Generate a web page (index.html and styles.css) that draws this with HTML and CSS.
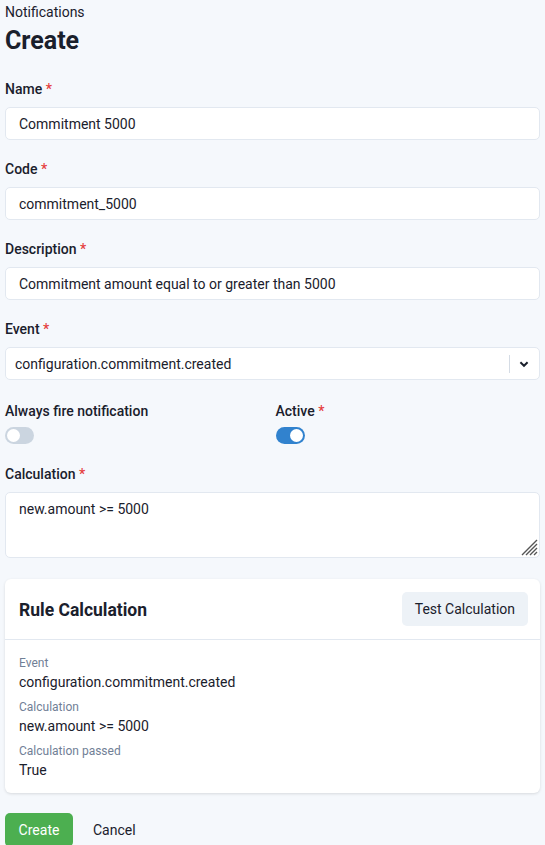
FILE: index.html
```html
<!DOCTYPE html>
<html lang="en">
<head>
    <meta charset="UTF-8">
    <meta name="viewport" content="width=device-width, initial-scale=1.0">
    <title>Create Notification</title>
    <link rel="stylesheet" href="styles.css">
</head>
<body>
    <div class="page">
        <div class="crumb">Notifications</div>
        <h1>Create</h1>

        <div class="field">
            <label>Name <span class="req">*</span></label>
            <input type="text" value="Commitment 5000">
        </div>
        <div class="field">
            <label>Code <span class="req">*</span></label>
            <input type="text" value="commitment_5000">
        </div>
        <div class="field">
            <label>Description <span class="req">*</span></label>
            <input type="text" value="Commitment amount equal to or greater than 5000">
        </div>
        <div class="field">
            <label>Event <span class="req">*</span></label>
            <div class="select">
                <span class="select-value">configuration.commitment.created</span>
                <span class="select-sep"></span>
                <svg class="chevron" width="12" height="12" viewBox="0 0 20 20"><path d="M4 7l6 6 6-6" fill="none" stroke="#1a202c" stroke-width="3.2"/></svg>
            </div>
        </div>

        <div class="switch-row">
            <div class="switch-col">
                <label>Always fire notification</label>
                <span class="toggle"></span>
            </div>
            <div class="switch-col">
                <label>Active <span class="req">*</span></label>
                <span class="toggle on"></span>
            </div>
        </div>

        <div class="field">
            <label>Calculation <span class="req">*</span></label>
            <div class="textarea-wrap">
                <textarea>new.amount >= 5000</textarea>
                <!-- resize grip -->
                <svg class="grip" width="18" height="18" viewBox="0 0 18 18">
                    <path d="M17 2L2 17M17 6L6 17M17 10L10 17M17 14L14 17" stroke="#555" stroke-width="1.4"/>
                </svg>
            </div>
        </div>

        <div class="card">
            <div class="card-head">
                <h2>Rule Calculation</h2>
                <button class="btn-light">Test Calculation</button>
            </div>
            <div class="card-body">
                <div class="item">
                    <div class="item-label">Event</div>
                    <div class="item-value">configuration.commitment.created</div>
                </div>
                <div class="item">
                    <div class="item-label">Calculation</div>
                    <div class="item-value">new.amount &gt;= 5000</div>
                </div>
                <div class="item">
                    <div class="item-label">Calculation passed</div>
                    <div class="item-value">True</div>
                </div>
            </div>
        </div>

        <div class="actions">
            <button class="btn-green">Create</button>
            <button class="btn-text">Cancel</button>
        </div>
    </div>
</body>
</html>
```

FILE: styles.css
```css
body {
    margin: 0;
    background-color: #f5f8fc;
    font-family: Roboto, "Noto Sans", sans-serif;
    color: #1a202c;
}
.page {
    padding: 4px 5px 20px 5px;
}
.crumb {
    font-size: 14px;
    line-height: 17px;
}
h1 {
    margin: 3px 0 22px 0;
    font-size: 25px;
    line-height: 34px;
    font-weight: 700;
}
.field {
    margin-bottom: 20px;
}
label {
    display: block;
    font-size: 14px;
    font-weight: 500;
    line-height: 18px;
    margin-bottom: 9px;
}
.req {
    color: #e53e3e;
}
input, textarea {
    display: block;
    width: 100%;
    box-sizing: border-box;
    height: 33px;
    padding: 0 13px;
    border: 1px solid #e2e8f0;
    border-radius: 5px;
    background: white;
    font-family: inherit;
    font-size: 14px;
    color: #1a202c;
}
.textarea-wrap {
    position: relative;
}
textarea {
    height: 66px;
    padding: 8px 13px;
    resize: none;
}
.grip {
    position: absolute;
    right: 2px;
    bottom: 2px;
}
.select {
    display: flex;
    align-items: center;
    height: 33px;
    box-sizing: border-box;
    border: 1px solid #e2e8f0;
    border-radius: 5px;
    background: white;
    padding: 0 9px 0 9px;
    font-size: 14px;
}
.select-value {
    flex: 1;
}
.select-sep {
    width: 1px;
    height: 18px;
    background: #d5dce5;
    margin-right: 8px;
}
.switch-row {
    display: grid;
    grid-template-columns: 1fr 1fr;
    column-gap: 6px;
    padding-top: 2px;
    margin-bottom: 21px;
}
.switch-row label {
    margin-bottom: 7px;
}
.toggle {
    display: block;
    width: 29px;
    height: 17px;
    border-radius: 9px;
    background: #cbd5e0;
    position: relative;
}
.toggle::after {
    content: "";
    position: absolute;
    top: 2px;
    left: 2px;
    width: 13px;
    height: 13px;
    border-radius: 50%;
    background: white;
}
.toggle.on {
    background: #3182ce;
}
.toggle.on::after {
    left: 14px;
}
.card {
    background: white;
    border-radius: 6px;
    box-shadow: 0 1px 3px rgba(0, 0, 0, 0.12);
    margin: 21px 0 20px 0;
}
.card-head {
    display: flex;
    align-items: center;
    justify-content: space-between;
    height: 61px;
    padding: 2px 12px 0 14px;
    box-sizing: border-box;
    border-bottom: 1px solid #e2e8f0;
}
h2 {
    margin: 0;
    font-size: 17.5px;
    font-weight: 700;
}
.btn-light {
    height: 34px;
    padding: 0 13px;
    margin-bottom: 2px;
    border: none;
    border-radius: 5px;
    background: #edf2f7;
    font-family: inherit;
    font-size: 14px;
    color: #1a202c;
}
.card-body {
    padding: 15px 14px 12px 14px;
}
.item {
    margin-bottom: 6px;
}
.item:last-child {
    margin-bottom: 0;
}
.item-label {
    font-size: 12px;
    line-height: 16px;
    color: #718096;
}
.item-value {
    font-size: 14px;
    line-height: 22px;
}
.actions {
    display: flex;
    align-items: center;
    gap: 6px;
}
.btn-green {
    height: 34px;
    width: 68px;
    padding: 0;
    border: none;
    border-radius: 5px;
    background: #4caf50;
    color: white;
    font-family: inherit;
    font-size: 14px;
}
.btn-text {
    border: none;
    background: none;
    font-family: inherit;
    font-size: 14px;
    color: #1a202c;
    padding: 0 14px;
}
```
